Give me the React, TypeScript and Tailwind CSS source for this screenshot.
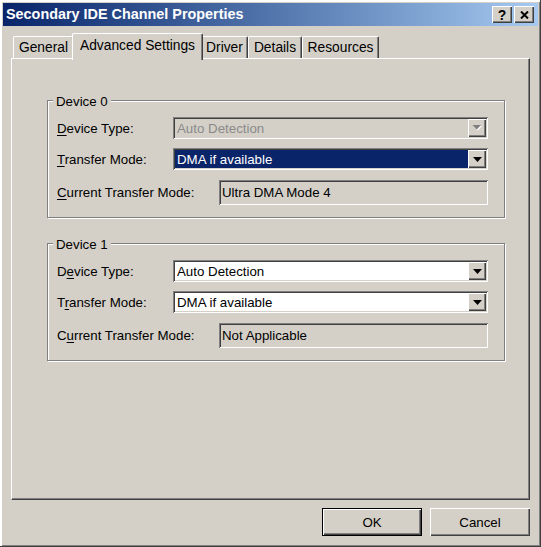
import React from "react";

const RAISED =
  "shadow-[inset_1px_1px_0_#ffffff,inset_-1px_-1px_0_#404040,inset_-2px_-2px_0_#808080]";
const SUNKEN =
  "shadow-[inset_1px_1px_0_#808080,inset_-1px_-1px_0_#ffffff,inset_2px_2px_0_#404040,inset_-2px_-2px_0_#d4d0c8]";

function Arrow({ disabled }: { disabled?: boolean }) {
  if (disabled) {
    return (
      <svg width="10" height="6" viewBox="0 0 10 6">
        <polygon points="1.5,1 10,1 5.75,5.5" fill="#ffffff" />
        <polygon points="0.5,0 9,0 4.75,4.5" fill="#808080" />
      </svg>
    );
  }
  return (
    <svg width="9" height="5" viewBox="0 0 9 5">
      <polygon points="0,0 9,0 4.5,5" fill="#000000" />
    </svg>
  );
}

function Combo({
  value,
  disabled,
  selected,
}: {
  value: string;
  disabled?: boolean;
  selected?: boolean;
}) {
  const bg = disabled ? "bg-[#d4d0c8]" : "bg-white";
  const text = selected
    ? "bg-[#0a246a] text-white"
    : disabled
    ? "text-[#8a8a8a]"
    : "text-black";
  return (
    <div className={`flex-1 h-[22px] flex p-[2px] ${bg} ${SUNKEN}`}>
      <div className={`flex-1 flex items-center pl-[2px] whitespace-nowrap ${text}`}>
        {value}
      </div>
      <div className={`w-[18px] h-[18px] flex items-center justify-center bg-[#d4d0c8] ${RAISED}`}>
        <Arrow disabled={disabled} />
      </div>
    </div>
  );
}

function Field({ value }: { value: string }) {
  return (
    <div className={`flex-1 h-[25px] flex items-center pl-[3px] bg-[#d4d0c8] ${SUNKEN}`}>
      {value}
    </div>
  );
}

function Group({
  title,
  typeLabel,
  modeLabel,
  currentLabel,
  typeDisabled,
  modeSelected,
  current,
}: {
  title: string;
  typeLabel: React.ReactNode;
  modeLabel: React.ReactNode;
  currentLabel: React.ReactNode;
  typeDisabled?: boolean;
  modeSelected?: boolean;
  current: string;
}) {
  return (
    <div className="relative border border-[#808080] shadow-[inset_1px_1px_0_#ffffff,1px_1px_0_#ffffff] pt-[16px] pb-[12px] pl-[9px] pr-[16px] flex flex-col">
      <div className="absolute left-[5px] -top-[7px] px-[3px] bg-[#d4d0c8] leading-[15px]">
        {title}
      </div>
      <div className="flex items-center h-[22px]">
        <div className="w-[116px] whitespace-nowrap">{typeLabel}</div>
        <Combo value="Auto Detection" disabled={typeDisabled} />
      </div>
      <div className="flex items-center h-[22px] mt-[9px]">
        <div className="w-[116px] whitespace-nowrap">{modeLabel}</div>
        <Combo value="DMA if available" selected={modeSelected} />
      </div>
      <div className="flex items-center h-[25px] mt-[10px]">
        <div className="w-[162px] whitespace-nowrap">{currentLabel}</div>
        <Field value={current} />
      </div>
    </div>
  );
}

const U = ({ children }: { children: React.ReactNode }) => (
  <span className="underline underline-offset-[2px]">{children}</span>
);

const tabs = [
  { label: "General", w: "w-[61px]" },
  { label: "Advanced Settings", w: "w-[125px]", selected: true },
  { label: "Driver", w: "w-[47px]" },
  { label: "Details", w: "w-[54px]" },
  { label: "Resources", w: "w-[77px]" },
];

export default function App() {
  return (
    <div className="w-full h-[547px] bg-[#d4d0c8] p-[3px] flex flex-col text-[13.3px] leading-[15px] text-black font-['Liberation_Sans',Arial,sans-serif] shadow-[inset_-1px_-1px_0_#404040,inset_2px_2px_0_#ffffff,inset_-2px_-2px_0_#808080] select-none">
      {/* Title bar */}
      <div className="h-[23px] flex items-center bg-linear-to-r from-[#0a246a] to-[#a6caf0] pl-[3px] pr-[4px]">
        <div className="flex-1 text-white font-bold text-[14.4px] whitespace-nowrap">
          Secondary IDE Channel Properties
        </div>
        <div className="flex gap-[2px]">
          <div className={`w-[20px] h-[17px] bg-[#d4d0c8] flex items-center justify-center font-bold text-[14px] leading-none ${RAISED}`}>
            ?
          </div>
          <div className={`w-[20px] h-[17px] bg-[#d4d0c8] flex items-center justify-center ${RAISED}`}>
            <svg width="9" height="8" viewBox="0 0 9 8">
              <path d="M1 0.5 L8 7.5 M8 0.5 L1 7.5" stroke="#000" strokeWidth="2" />
            </svg>
          </div>
        </div>
      </div>

      <div className="flex-1 flex flex-col px-[8px] pt-[8px]">
        {/* Tabs */}
        <div className="relative z-10 flex items-end h-[24px] pl-[2px] text-[13.8px]">
          {tabs.map((t) =>
            t.selected ? (
              <div
                key={t.label}
                className={`${t.w} relative z-10 -mx-[2px] -mb-[2px] h-[26px] box-content px-[2px] pb-0 bg-[#d4d0c8] border-l border-t border-white border-r border-r-[#404040] rounded-t-[2px] shadow-[inset_-1px_0_0_#808080] flex items-center justify-center`}
              >
                <span className="pb-[3px] whitespace-nowrap">{t.label}</span>
              </div>
            ) : (
              <div
                key={t.label}
                className={`${t.w} h-[22px] bg-[#d4d0c8] border-l border-t border-white border-r border-r-[#404040] rounded-t-[2px] shadow-[inset_-1px_0_0_#808080] flex items-center justify-center`}
              >
                <span className="whitespace-nowrap">{t.label}</span>
              </div>
            )
          )}
        </div>

        {/* Panel */}
        <div className="flex-1 border border-white border-r-[#404040] border-b-[#404040] shadow-[inset_-1px_-1px_0_#808080] pt-[41px] pl-[35px] pr-[24px] flex flex-col gap-[25px]">
          <Group
            title="Device 0"
            typeLabel={<><U>D</U>evice Type:</>}
            modeLabel={<><U>T</U>ransfer Mode:</>}
            currentLabel={<><U>C</U>urrent Transfer Mode:</>}
            typeDisabled
            modeSelected
            current="Ultra DMA Mode 4"
          />
          <Group
            title="Device 1"
            typeLabel={<>D<U>e</U>vice Type:</>}
            modeLabel={<>T<U>r</U>ansfer Mode:</>}
            currentLabel={<>C<U>u</U>rrent Transfer Mode:</>}
            current="Not Applicable"
          />
        </div>

        {/* Buttons */}
        <div className="flex justify-end gap-[8px] mt-[8px] mb-[8px] h-[28px]">
          <div className="w-[100px] h-[28px] border border-black">
            <div className={`w-full h-full flex items-center justify-center bg-[#d4d0c8] ${RAISED}`}>
              OK
            </div>
          </div>
          <div className={`w-[100px] h-[28px] flex items-center justify-center bg-[#d4d0c8] ${RAISED}`}>
            Cancel
          </div>
        </div>
      </div>
    </div>
  );
}
